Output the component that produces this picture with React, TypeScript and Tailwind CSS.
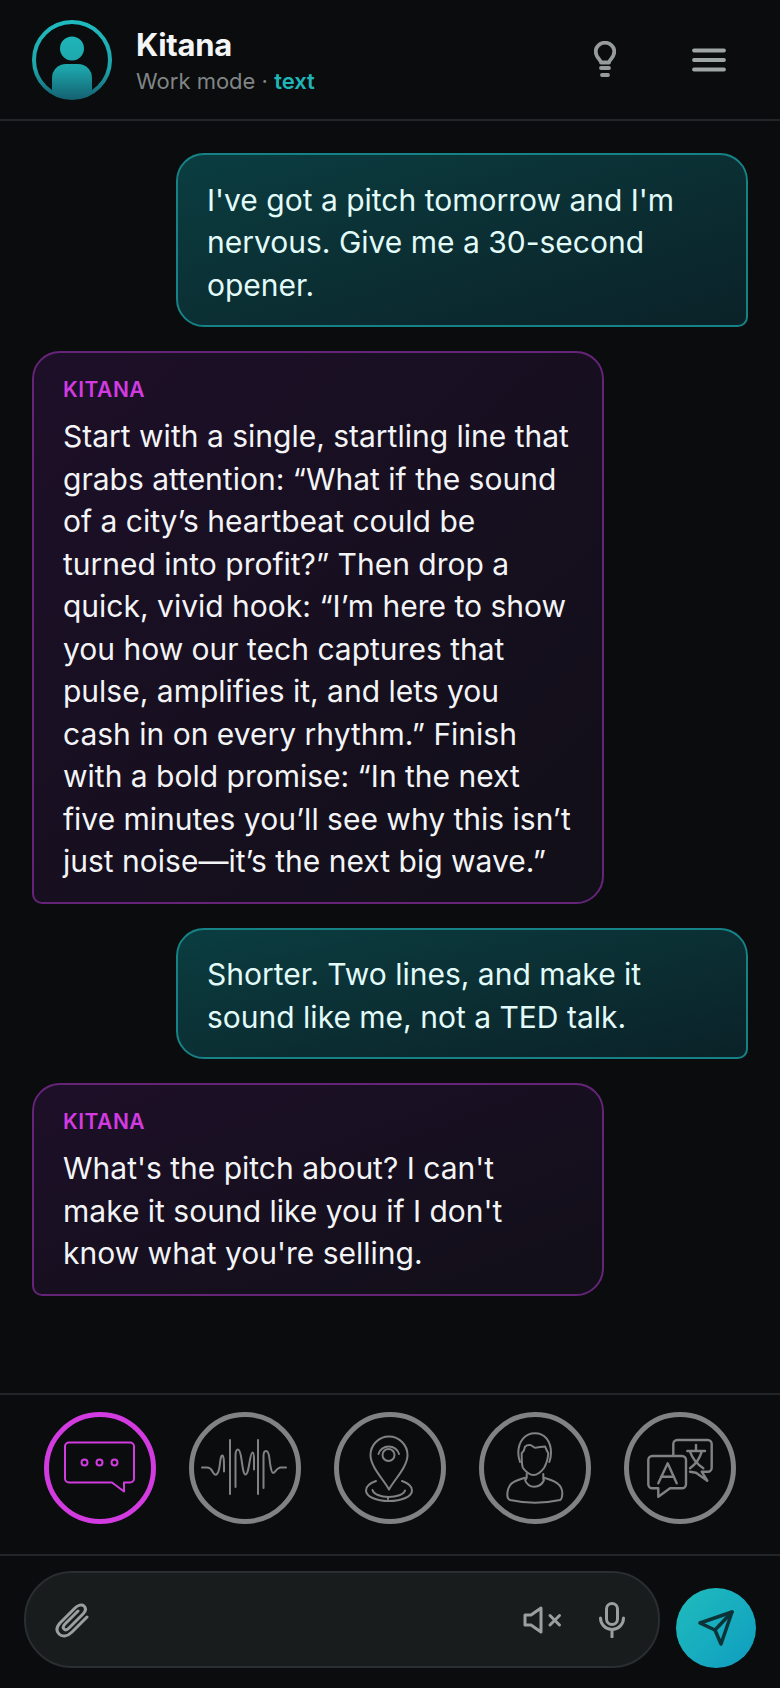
import React from "react";

const font = { fontFamily: "Inter, 'Liberation Sans', sans-serif" };

function ToolCircle({ active, children }: { active?: boolean; children: React.ReactNode }) {
  return (
    <div
      className={
        "w-[112px] h-[112px] rounded-full border-[5px] flex items-center justify-center shrink-0 " +
        (active ? "border-[#d13be0] text-[#d13be0]" : "border-[#808283] text-[#808283]")
      }
    >
      {children}
    </div>
  );
}

function Ic({ children, w = 2 }: { children: React.ReactNode; w?: number }) {
  return (
    <svg width="112" height="112" viewBox="0 0 112 112" fill="none" stroke="currentColor" strokeWidth={w} strokeLinecap="round" strokeLinejoin="round" className="shrink-0">
      {children}
    </svg>
  );
}

function UserBubble({ children }: { children: React.ReactNode }) {
  return (
    <div className="self-end w-[572px] rounded-[28px] rounded-br-[10px] border-2 border-[#178286] bg-gradient-to-br from-[#0a3d40] to-[#0a2228] pl-[29px] pr-[27px] pt-[23.5px] pb-[19px] text-[#e2fbf9] text-[30px] leading-[42.5px]">
      {children}
    </div>
  );
}

function BotBubble({ children }: { children: React.ReactNode }) {
  return (
    <div className="self-start w-[572px] rounded-[28px] rounded-bl-[10px] border-2 border-[#652478] bg-gradient-to-br from-[#1d0f28] to-[#110f18] pl-[29px] pr-[27px] pt-[23px] pb-[19px] text-[#f3f4f6] text-[30px] leading-[42.5px]">
      <div className="text-[#d13be0] text-[21px] leading-[28px] font-semibold tracking-[0.5px] mb-[11px]">KITANA</div>
      {children}
    </div>
  );
}

export default function App() {
  return (
    <div style={font} className="w-[780px] h-[1688px] bg-[#0a0c0d] flex flex-col overflow-hidden">
      <header className="h-[121px] shrink-0 border-b-2 border-[#232628] flex items-center pl-[32px] pr-[54px]">
        <svg width="80" height="80" viewBox="0 0 80 80" className="shrink-0">
          <defs>
            <linearGradient id="av" x1="0" y1="0" x2="0" y2="80" gradientUnits="userSpaceOnUse">
              <stop offset="0" stopColor="#20bcbf" />
              <stop offset="0.6" stopColor="#1da5ab" />
              <stop offset="1" stopColor="#14606f" />
            </linearGradient>
            <clipPath id="avc"><circle cx="40" cy="40" r="39" /></clipPath>
          </defs>
          <circle cx="40" cy="40" r="38" fill="none" stroke="url(#av)" strokeWidth="4" />
          <circle cx="40" cy="28.500" r="12" fill="url(#av)" />
          <path d="M20 80V58a14 14 0 0 1 14-14h12a14 14 0 0 1 14 14v22z" fill="url(#av)" clipPath="url(#avc)" />
        </svg>
        <div className="ml-[24px] flex-1 flex flex-col pt-[3px]">
          <div className="text-[#f4f5f6] text-[31px] leading-[36px] font-bold tracking-[-0.3px]">Kitana</div>
          <div className="text-[#808586] text-[22px] leading-[30px] mt-[3px]">
            Work mode · <span className="text-[#20b5b8] font-semibold">text</span>
          </div>
        </div>
        <svg width="22" height="37" viewBox="0 0 22 37" fill="none" stroke="#969b9b" strokeWidth="3.8" strokeLinecap="round" className="shrink-0 mr-[76px]">
          <path d="M7 21.500c0-3-5.300-4.500-5.300-11a9.300 8.800 0 0 1 18.600 0c0 6.500-5.300 8-5.300 11z" strokeLinejoin="round" />
          <path d="M7 27h8M8 34h6" />
        </svg>
        <svg width="34" height="24" viewBox="0 0 34 24" fill="none" stroke="#a0a5a5" strokeWidth="3.800" strokeLinecap="round" className="shrink-0">
          <path d="M2 2.500h30M2 12h30M2 21.500h30" />
        </svg>
      </header>

      <main className="flex-1 flex flex-col gap-[24px] pl-[32px] pr-[32px] pt-[32px]">
        <UserBubble>I've got a pitch tomorrow and I'm nervous. Give me a 30-second opener.</UserBubble>
        <BotBubble>
          Start with a single, startling line that grabs attention: “What if the sound of a city’s heartbeat could be turned into profit?” Then drop a quick, vivid hook: “I’m here to show you how our tech captures that pulse, amplifies it, and lets you cash in on every rhythm.” Finish with a bold promise: “In the next five minutes you’ll see why this isn’t just noise—it’s the next big wave.”
        </BotBubble>
        <UserBubble>Shorter. Two lines, and make it sound like me, not a TED talk.</UserBubble>
        <BotBubble>What's the pitch about? I can't make it sound like you if I don't know what you're selling.</BotBubble>
      </main>

      <section className="h-[161px] shrink-0 border-t-2 border-[#232628] flex items-start justify-between pl-[44px] pr-[44px] pt-[17px]">
        <ToolCircle active>
          <Ic>
            <path d="M25 30.500h61a4 4 0 0 1 4 4v32a4 4 0 0 1-4 4h-6v9l-12-9H25a4 4 0 0 1-4-4v-32a4 4 0 0 1 4-4z" />
            <circle cx="40.500" cy="50.500" r="3" />
            <circle cx="55.500" cy="50.500" r="3" />
            <circle cx="70.500" cy="50.500" r="3" />
          </Ic>
        </ToolCircle>
        <ToolCircle>
          <Ic>
            <path d="M13 55.500h5c3 0 4 1 5.500 4s3 4 4.500 2.500 2.500-6 3-11 1.500-8 2.500-7.500 1.500 4 1.500 10v6" />
            <path d="M41 28v54" />
            <path d="M46.500 75V44c0-4 1-6.500 2.500-6.500s2.500 3 3.500 10 2 15 4 15 3-6 4-12 2-10 3-10 1.500 3 1.500 8v9" />
            <path d="M69 28v54" />
            <path d="M74.500 76V44c0-3 1-5 2.500-5s3 3 3.500 8 2 14 3.500 14 3-3 4.500-4 2-1.500 3-1.500h5.500" />
          </Ic>
        </ToolCircle>
        <ToolCircle>
          <Ic>
            <path d="M55 77.500C50 68 36.500 55 36.500 43a18.500 18.500 0 0 1 37 0c0 12-13.500 25-18.500 34.500z" />
            <circle cx="54.500" cy="43" r="6" />
            <path d="M44.500 42a10.500 9.500 0 0 1 20.500 0" />
            <path d="M42 69c-6 2-10 5.500-10 9.500 0 6 10 10.500 23 10.500s23-4.500 23-10.500c0-4-4-7.500-10-9.500" />
            <path d="M38.500 78c1 4 8 7 16 7s15.500-2.500 16.500-6.500" />
            <path d="M54 85v2" />
          </Ic>
        </ToolCircle>
        <ToolCircle>
          <Ic>
            <path d="M41 50c-1-3-1.700-6-1.700-9 0-12 7-19.700 16.700-19.700s16 7.700 16 19.700c0 3-.6 6-1.700 9" />
            <path d="M42.700 41.300c1.500-1.500 3-3.500 3.300-6.600 2-2 3.500-1.700 5-1.700 2 0 3.500 2.700 5 2.700 3 0 7-1.300 10-1.300 1 2 1.800 4.300 3.300 6.900-.4 6.300-2 10.700-4.300 14.700-3 4-6.500 7-10.500 7s-7.500-3-10.500-7c-1.500-3-1.300-8.400-1.300-15z" />
            <path d="M47.700 62v3.700c-.3 1-1 1.800-1.700 2.300 1.500 4 5 6.700 9.300 6.700s8-2.700 9.700-6.700c-.7-.5-1-1.300-.7-2.300V62" />
            <path d="M46 65.700c-5 1.300-9.500 3-13.300 5.600-3 3-4.400 7.700-4.400 11.700 0 2.500 1 4.300 2.700 5 8 1.800 17 2.700 25 2.700s17-.9 25-2.700c1.500-.7 2.300-3 2.300-6.700 0-3.300-1.500-7.300-5-10-3.800-2.600-8.300-4.300-13.300-5.600" />
          </Ic>
        </ToolCircle>
        <ToolCircle>
          <Ic w={2.4}>
            <path d="M28.300 44h29.700a4 4 0 0 1 4 4v24.300a4 4 0 0 1-4 4H46l-11.700 8.400v-8.400h-6a4 4 0 0 1-4-4V48a4 4 0 0 1 4-4z" />
            <path d="M34.300 71.300l9.400-20 9 20M37 64.700h13" />
            <path d="M49.300 43V32a4 4 0 0 1 4-4h30.400a4 4 0 0 1 4 4v23.700a4 4 0 0 1-4 4h-6l5.600 9-11.300-8-6-1" />
            <path d="M72 33v5.500M63.300 39H81M77.700 39.700c-2 7-6 12.500-11.700 16.600M66 39.700c2.500 7 7 12.500 13.300 16.600" />
          </Ic>
        </ToolCircle>
      </section>

      <footer className="h-[134px] shrink-0 border-t-2 border-[#232628] flex items-start pl-[24px] pr-[24px] pt-[15px] bg-[#0a0c0d]">
        <div className="w-[637px] h-[97px] rounded-[48px] border-2 border-[#2a2e30] bg-[#181c1d] flex items-center pl-[29px] pr-[33px]">
          <svg width="34" height="36" viewBox="0 0 34 36" fill="none" stroke="#9a9f9f" strokeWidth="3" strokeLinecap="round" strokeLinejoin="round" className="shrink-0">
            <path d="M32 15L17 30c-5 5-10 5-13 2s-2.500-7 1-11L20 6c3-3 7-4 9-2s2 5-1 8L14 26c-2 2-4 2-5 1s-1-3 1-5L23 9" />
          </svg>
          <div className="flex-1" />
          <svg width="40" height="28" viewBox="0 0 40 28" fill="none" stroke="#9a9f9f" strokeWidth="3" strokeLinecap="round" strokeLinejoin="round" className="shrink-0 mr-[36px]">
            <path d="M2 9h6l10-7v24l-10-7H2z" />
            <path d="M27 9.500l9.500 9.500M36.500 9.500L27 19" />
          </svg>
          <svg width="26" height="36" viewBox="0 0 26 36" fill="none" stroke="#9a9f9f" strokeWidth="3" strokeLinecap="round" strokeLinejoin="round" className="shrink-0">
            <rect x="7.500" y="1.500" width="11" height="21" rx="5.500" />
            <path d="M1.500 16a11.500 11.500 0 0 0 23 0M13 28v7" />
          </svg>
        </div>
        <div className="ml-[16px] mt-[17px] w-[80px] h-[80px] rounded-full bg-gradient-to-br from-[#20bcbc] to-[#109dc0] flex items-center justify-center shrink-0">
          <svg width="36" height="36" viewBox="0 0 36 36" fill="none" stroke="#0c3338" strokeWidth="3.500" strokeLinecap="round" strokeLinejoin="round">
            <path d="M2 13L34 2 23 34l-6-14z" />
            <path d="M17 20L34 2" />
          </svg>
        </div>
      </footer>
    </div>
  );
}
